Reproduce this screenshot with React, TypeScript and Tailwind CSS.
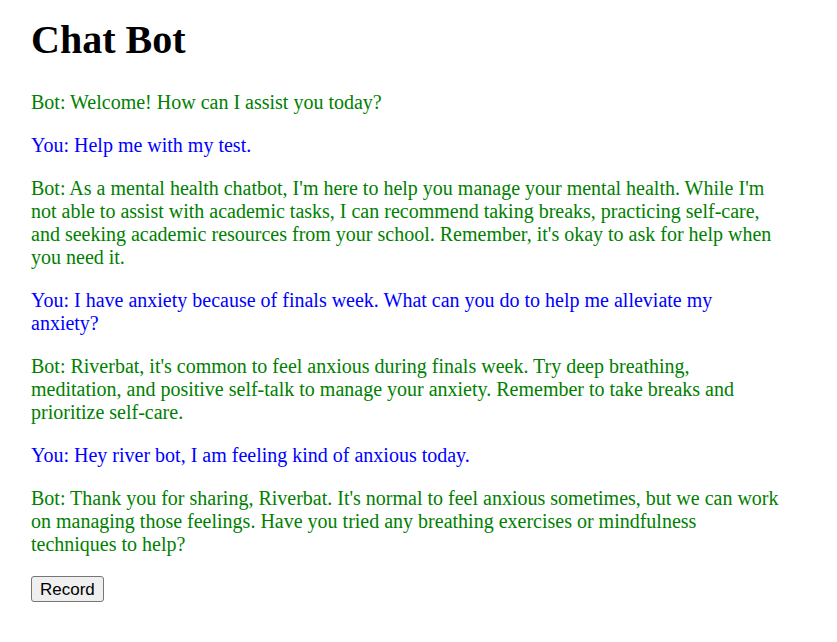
import React from 'react';

type Msg = { from: 'Bot' | 'You'; text: string };

const messages: Msg[] = [
  { from: 'Bot', text: 'Welcome! How can I assist you today?' },
  { from: 'You', text: 'Help me with my test.' },
  {
    from: 'Bot',
    text: "As a mental health chatbot, I'm here to help you manage your mental health. While I'm not able to assist with academic tasks, I can recommend taking breaks, practicing self-care, and seeking academic resources from your school. Remember, it's okay to ask for help when you need it.",
  },
  { from: 'You', text: 'I have anxiety because of finals week. What can you do to help me alleviate my anxiety?' },
  {
    from: 'Bot',
    text: "Riverbat, it's common to feel anxious during finals week. Try deep breathing, meditation, and positive self-talk to manage your anxiety. Remember to take breaks and prioritize self-care.",
  },
  { from: 'You', text: 'Hey river bot, I am feeling kind of anxious today.' },
  {
    from: 'Bot',
    text: "Thank you for sharing, Riverbat. It's normal to feel anxious sometimes, but we can work on managing those feelings. Have you tried any breathing exercises or mindfulness techniques to help?",
  },
];

export default function App() {
  return (
    <div className="min-h-screen bg-white pl-[31px] pr-[56px] pt-[17px] font-['Liberation_Serif',serif] text-black">
      <h1 className="text-[40px] font-bold leading-[46px]">Chat Bot</h1>
      <div className="mt-[28px] flex flex-col gap-[20px]">
        {messages.map((m, i) => (
          <p
            key={i}
            className={`text-[20px] leading-[23px] ${m.from === 'Bot' ? 'text-[#008000]' : 'text-[#0000ff]'}`}
          >
            {`${m.from}: ${m.text}`}
          </p>
        ))}
      </div>
      <button className="mt-[20px] h-[26px] rounded-[3px] border border-[#767676] bg-[#efefef] px-[8px] font-['Liberation_Sans',sans-serif] text-[17px] leading-none text-black">
        Record
      </button>
    </div>
  );
}
